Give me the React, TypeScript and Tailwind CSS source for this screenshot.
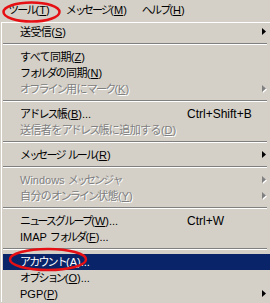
import React from "react";

type Item = {
  label: string;
  key?: string;
  suffix?: string;
  shortcut?: string;
  sub?: boolean;
  disabled?: boolean;
  active?: boolean;
};

type Entry = Item | "sep";

const entries: Entry[] = [
  { label: "送受信", key: "S", sub: true },
  "sep",
  { label: "すべて同期", key: "Z" },
  { label: "フォルダの同期", key: "N" },
  { label: "オフライン用にマーク", key: "K", sub: true, disabled: true },
  "sep",
  { label: "アドレス帳", key: "B", suffix: "...", shortcut: "Ctrl+Shift+B" },
  { label: "送信者をアドレス帳に追加する", key: "D", disabled: true },
  "sep",
  { label: "メッセージ ルール", key: "R", sub: true },
  "sep",
  { label: "Windows メッセンジャ", sub: true, disabled: true },
  { label: "自分のオンライン状態", key: "Y", sub: true, disabled: true },
  "sep",
  { label: "ニュースグループ", key: "W", suffix: "...", shortcut: "Ctrl+W" },
  { label: "IMAP フォルダ", key: "F", suffix: "..." },
  "sep",
  { label: "アカウント", key: "A", suffix: "...", active: true },
  { label: "オプション", key: "O", suffix: "..." },
  { label: "PGP", key: "P", sub: true },
];

const font = "font-['Liberation_Sans','Noto_Sans_CJK_JP',sans-serif]";

// MS UI Gothic 風にカナを詰める
function charClass(c: string) {
  if (/[ァィゥェォッャュョ]/.test(c)) return "tracking-[-3px]";
  if (/[\u30A0-\u30FF]/.test(c)) return "tracking-[-1.8px]";
  return "tracking-[-0.6px]";
}

function Jp({ text }: { text: string }) {
  const parts = text.split(/([\x00-\x7f]+)/).filter(Boolean);
  return (
    <>
      {parts.map((p, i) =>
        /^[\x00-\x7f]+$/.test(p) ? (
          <span key={i}>{p}</span>
        ) : (
          Array.from(p).map((c, j) => (
            <span key={`${i}-${j}`} className={charClass(c)}>
              {c}
            </span>
          ))
        )
      )}
    </>
  );
}

function Label({ label, k }: { label: string; k?: string }) {
  return (
    <span>
      <Jp text={label} />
      {k && (
        <>
          (<span className="underline underline-offset-[1px]">{k}</span>)
        </>
      )}
    </span>
  );
}

function Arrow({ disabled, active }: { disabled?: boolean; active?: boolean }) {
  const fill = active ? "#ffffff" : disabled ? "#808080" : "#000000";
  return (
    <svg width="5" height="8" viewBox="0 0 5 8" className="shrink-0">
      {disabled && <polygon points="1,1 5,4.5 1,8" fill="#ffffff" />}
      <polygon points="0,0 4,3.5 0,7" fill={fill} />
    </svg>
  );
}

function MenuRow({ item }: { item: Item }) {
  const tone = item.active
    ? "bg-[#0a246a] text-white"
    : item.disabled
    ? "text-[#808080] [text-shadow:1px_1px_0_#ffffff]"
    : "text-black";
  return (
    <div className={`h-[16px] w-[267px] flex items-center whitespace-nowrap ${tone}`}>
      <div className="w-[184px] pl-[17px] shrink-0">
        <Label label={item.label} k={item.key} />
        {item.suffix}
      </div>
      <div className="flex-1 text-[12px]">{item.shortcut}</div>
      <div className="w-[4px] mr-[4px] flex items-center">
        {item.sub && <Arrow disabled={item.disabled} active={item.active} />}
      </div>
    </div>
  );
}

export default function App() {
  return (
    <div className={`relative w-[270px] h-[303px] overflow-hidden bg-[#d4d0c8] text-[11px] leading-none ${font}`}>
      {/* メニューバー */}
      <div className="h-[21px] flex items-center pl-px text-black whitespace-nowrap">
        <div className="pl-[7px] pr-[8px]">
          <Label label="ツール" k="T" />
        </div>
        <div className="px-[8px]">
          <Label label="メッセージ" k="M" />
        </div>
        <div className="px-[7px]">
          <Label label="ヘルプ" k="H" />
        </div>
      </div>

      {/* ドロップダウン */}
      <div className="pt-px pl-px">
        <div className="border-t border-l border-white pt-px pl-px">
          {entries.map((e, i) =>
            e === "sep" ? (
              <div key={i} className="h-[9px] w-[264px] pt-[3px]">
                <div className="border-t border-[#808080]" />
                <div className="border-t border-white" />
              </div>
            ) : (
              <MenuRow key={i} item={e} />
            )
          )}
        </div>
      </div>

      <svg className="absolute left-0 top-0 pointer-events-none" width="270" height="303">
        <ellipse cx="31.5" cy="12" rx="28" ry="9.5" fill="none" stroke="#e60f14" strokeWidth="2.5" />
        <ellipse cx="48" cy="259.5" rx="38" ry="10.5" fill="none" stroke="#e60f14" strokeWidth="2.5" />
      </svg>
    </div>
  );
}
